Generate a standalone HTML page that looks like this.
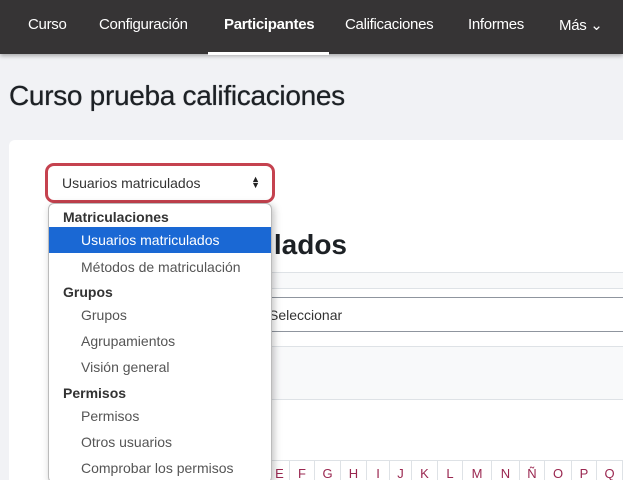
<!DOCTYPE html>
<html><head><meta charset="utf-8"><style>
*{margin:0;padding:0;box-sizing:border-box}
html,body{width:623px;height:480px;overflow:hidden}
body{background:#f1f2f5;font-family:"Liberation Sans",sans-serif;position:relative}
.nav{position:absolute;left:0;top:0;width:623px;height:54px;background:#363435;box-shadow:0 2px 4px rgba(0,0,0,.3)}
.nav span{position:absolute;top:16px;color:#fff;font-size:15px;letter-spacing:-0.3px}
.nav .act{font-weight:bold}
.ul{position:absolute;left:208px;top:52px;width:121px;height:3px;background:#fff}
h1{position:absolute;left:9px;top:80px;font-size:28px;font-weight:normal;color:#1d2125;letter-spacing:-0.3px;text-shadow:0 0 0.6px #1d2125}
.card{position:absolute;left:9px;top:140px;width:630px;height:360px;background:#fff;border-radius:6px}
.sel{position:absolute;left:45px;top:163px;width:230px;height:40px;border:3px solid #c5424f;border-radius:9px;background:#fff;font-size:14px;color:#333;padding:9px 0 0 14px}
.arr{position:absolute;right:12px;top:10px;font-size:9px;line-height:6px;color:#222}
.h2w{position:absolute;left:272px;top:225px;width:100px;height:45px;overflow:hidden}
.h2{position:absolute;right:25px;top:4px;font-size:28px;font-weight:bold;color:#1d2125;white-space:nowrap}
.l{position:absolute;left:270px;width:353px;height:1px;background:#dee2e6}
.band{position:absolute;left:270px;width:353px;background:#f8f9fa}
.ss{position:absolute;left:260px;top:297px;width:363px;height:35px;border-top:1px solid #8f959e;border-bottom:1px solid #8f959e;font-size:14px;color:#333;padding:9px 0 0 9px}
.letters{position:absolute;left:270px;top:460px;height:20px;display:flex;border-top:1px solid #dee2e6}
.letters span{display:block;border-right:1px solid #dee2e6;text-align:center;font-size:13px;color:#9a2750;padding-top:5px}
.dd{position:absolute;left:48px;top:203px;width:224px;height:280px;background:#fff;border:1px solid #bbb;border-radius:6px;box-shadow:2px 2px 8px rgba(0,0,0,.25);font-size:14px}
.dd div{position:absolute;left:0;width:100%;height:26px;padding-top:5px}
.g{padding-left:14px;color:#333;font-weight:bold;}
.i{padding-left:32px;color:#555}
.hi{background:#1a68d4;color:#fff!important}
</style></head><body>
<div class="nav">
<span style="left:28px">Curso</span>
<span style="left:99px">Configuración</span>
<span class="act" style="left:224px">Participantes</span>
<span style="left:345px">Calificaciones</span>
<span style="left:468px">Informes</span>
<span style="left:559px">Más ⌄</span>
<div class="ul"></div>
</div>
<h1>Curso prueba calificaciones</h1>
<div class="card"></div>
<div class="h2w"><div class="h2">Usuarios matriculados</div></div>
<div class="l" style="top:272px"></div>
<div class="band" style="top:273px;height:15px"></div>
<div class="l" style="top:288px"></div>
<div class="ss">Seleccionar</div>
<div class="l" style="top:346px"></div>
<div class="band" style="top:347px;height:52px"></div>
<div class="l" style="top:399px"></div>
<div class="letters">
<span style="width:20px">E</span><span style="width:25px">F</span><span style="width:26px">G</span><span style="width:26px">H</span><span style="width:23px">I</span><span style="width:22px">J</span><span style="width:26px">K</span><span style="width:25px">L</span><span style="width:29px">M</span><span style="width:28px">N</span><span style="width:25px">Ñ</span><span style="width:27px">O</span><span style="width:25px">P</span><span style="width:26px">Q</span>
</div>
<div class="sel">Usuarios matriculados<div class="arr">▲<br>▼</div></div>
<div class="dd">
<div class="g" style="top:0px">Matriculaciones</div>
<div class="i hi" style="top:23px">Usuarios matriculados</div>
<div class="i" style="top:50px">Métodos de matriculación</div>
<div class="g" style="top:75px">Grupos</div>
<div class="i" style="top:98px">Grupos</div>
<div class="i" style="top:124px">Agrupamientos</div>
<div class="i" style="top:150px">Visión general</div>
<div class="g" style="top:176px">Permisos</div>
<div class="i" style="top:199px">Permisos</div>
<div class="i" style="top:225px">Otros usuarios</div>
<div class="i" style="top:251px">Comprobar los permisos</div>
</div>
</body></html>
